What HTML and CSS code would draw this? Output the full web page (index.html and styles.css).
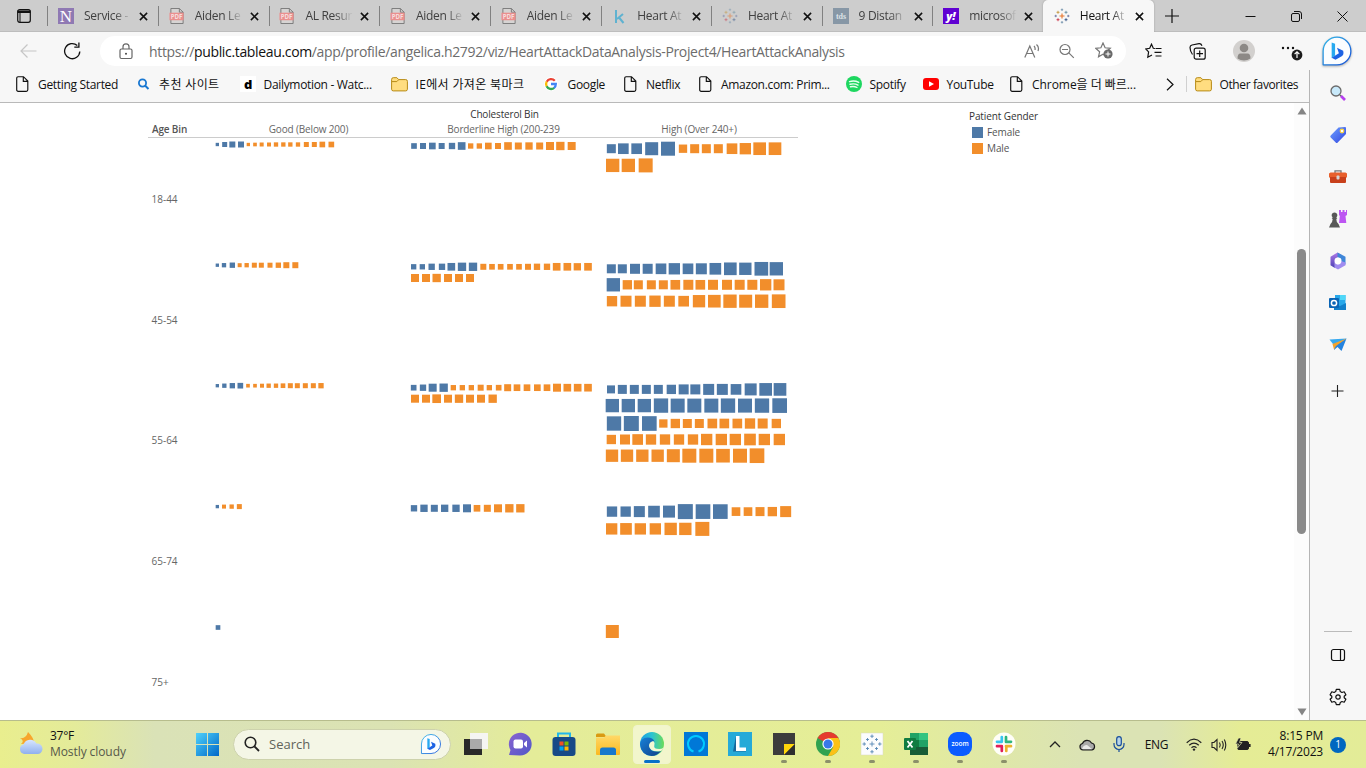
FILE: index.html
```html
<!DOCTYPE html>
<html lang="en">
<head>
<meta charset="utf-8">
<title>Heart Attack Analysis</title>
<link rel="stylesheet" href="styles.css">
</head>
<body>
<svg class="defs" width="0" height="0">
  <defs>
    <linearGradient id="gBing" x1="0" y1="0" x2="1" y2="1"><stop offset="0" stop-color="#31b8e8"/><stop offset="1" stop-color="#1750d8"/></linearGradient>
    <linearGradient id="gTag" x1="0" y1="0" x2="1" y2="1"><stop offset="0" stop-color="#6da0ff"/><stop offset="1" stop-color="#3347e0"/></linearGradient>
    <linearGradient id="gWin" x1="0" y1="0" x2="1" y2="1"><stop offset="0" stop-color="#4fd2fb"/><stop offset="1" stop-color="#0067c8"/></linearGradient>
    <linearGradient id="gFold" x1="0" y1="0" x2="0" y2="1"><stop offset="0" stop-color="#ffd868"/><stop offset="1" stop-color="#fbb91f"/></linearGradient>
    <linearGradient id="gCloud" x1="0" y1="0" x2="0" y2="1"><stop offset="0" stop-color="#d8e6ff"/><stop offset="1" stop-color="#8fb0ee"/></linearGradient>
    <linearGradient id="gEdge" x1="0" y1="0" x2="1" y2="0"><stop offset="0" stop-color="#1b9de2"/><stop offset=".5" stop-color="#2bc3d2"/><stop offset="1" stop-color="#6bdc5a"/></linearGradient>
    <linearGradient id="gEdge2" x1="0" y1="0" x2="1" y2="1"><stop offset="0" stop-color="#1681d8"/><stop offset="1" stop-color="#123f88"/></linearGradient>
    <linearGradient id="gChat" x1="0" y1="0" x2="1" y2="1"><stop offset="0" stop-color="#8a63d0"/><stop offset="1" stop-color="#5058c8"/></linearGradient>
    <linearGradient id="gM365" x1="0" y1="0" x2="0" y2="1"><stop offset="0" stop-color="#b07be8"/><stop offset="1" stop-color="#4b3fb5"/></linearGradient>
  </defs>
  <symbol id="pdf" viewBox="0 0 16 17"><path d="M1.500 .5h9L14.500 4.500V16.500H1.500z" fill="#d6d4d3" stroke="#777"/><path d="M10.500.5v4h4" fill="none" stroke="#777"/><rect y="5" width="15" height="8" fill="#ea8f8e"/><text x="7.500" y="11.500" text-anchor="middle" font-size="6.500" font-weight="700" fill="#f6dddd" class="ui">PDF</text></symbol>
  <symbol id="page" viewBox="0 0 13 16"><path d="M1.700.7h5.800l4.300 4.300v8.800q0 1.500-1.500 1.500H2.200q-1.500 0-1.500-1.500V2.200Q.7.700 2.200.7M7.300.9v4.400h4.400" fill="none" stroke="#111" stroke-width="1.150"/></symbol>
  <symbol id="folder" viewBox="0 0 17 15"><path d="M.6 2.500Q.6.700 2.300.7h3.600l1.800 1.900h7q1.700 0 1.700 1.700v7.900q0 1.700-1.700 1.700H2.300q-1.700 0-1.700-1.700z" fill="#ffdd80" stroke="#b78a15"/><path d="M1 4.600h4.800l2-2" fill="none" stroke="#b78a15"/></symbol>
  <symbol id="close" viewBox="0 0 10 10"><path d="M1 1l8 8M9 1L1 9" stroke="#111" stroke-width="1.700"/></symbol>
  <symbol id="tableau" viewBox="0 0 16 16"><g fill="none" stroke-width=".8"><path d="M8 5.500v5M5.500 8h5" stroke="#e8762c" stroke-width="1.100"/><path d="M4 2.800v3M2.500 4.300h3" stroke="#c28f2c"/><path d="M12 2.800v3M10.500 4.300h3" stroke="#5b879b"/><path d="M4 10.200v3M2.500 11.700h3" stroke="#c72035"/><path d="M12 10.200v3M10.500 11.700h3" stroke="#1f447e"/><path d="M8 .5v2.500M6.800 1.700h2.400M8 13v2.500M6.800 14.300h2.400" stroke="#6c8ea8"/><path d="M1.700 6.800v2.400M.5 8h2.500M14.300 6.800v2.400M13 8h2.500" stroke="#6670a0"/></g></symbol>
  <symbol id="bing" viewBox="0 0 30 30"><path d="M2 28V15A13 13 0 1 1 15 28z" fill="#fbfdff" stroke="url(#gBing)" stroke-width="1.200" stroke-linejoin="round"/><path d="M10 7l3.200 1.300v11l-3.200 2.400z" fill="#27a9f0"/><path d="M15 12l5.800 2.700q1.200 4.300-2.600 6l-4.600 2.500-3.600-1.800 6.800-4.200z" fill="#1c62e4"/></symbol>
</svg>

<header class="tabs">
  <div class="workspace"><svg width="16" height="16" viewBox="0 0 16 16"><rect x="1.700" y="1.700" width="12.600" height="12.600" rx="2" fill="none" stroke="#111" stroke-width="1.200"/><path d="M1.500 2.500h13v2.500h-13z" fill="#111"/><path d="M4 5v9" stroke="#111"/></svg></div>
  <div class="tab"><svg class="fav" viewBox="0 0 16 16"><rect width="16" height="16" fill="#8f79b3"/><text x="8" y="14" text-anchor="middle" font-size="17" class="serif" fill="#fff">N</text></svg><span>Service -</span><svg class="x"><use href="#close"/></svg></div>
  <div class="tab"><svg class="fav"><use href="#pdf"/></svg><span>Aiden Le</span><svg class="x"><use href="#close"/></svg></div>
  <div class="tab"><svg class="fav"><use href="#pdf"/></svg><span>AL Resur</span><svg class="x"><use href="#close"/></svg></div>
  <div class="tab"><svg class="fav"><use href="#pdf"/></svg><span>Aiden Le</span><svg class="x"><use href="#close"/></svg></div>
  <div class="tab"><svg class="fav"><use href="#pdf"/></svg><span>Aiden Le</span><svg class="x"><use href="#close"/></svg></div>
  <div class="tab"><svg class="fav" viewBox="0 0 16 16"><path d="M5 2v13M12 6L6 11M8 9.500L12.500 15" fill="none" stroke="#5fb2d0" stroke-width="2"/></svg><span>Heart At</span><svg class="x"><use href="#close"/></svg></div>
  <div class="tab"><svg class="fav pale"><use href="#tableau"/></svg><span>Heart At</span><svg class="x"><use href="#close"/></svg></div>
  <div class="tab"><svg class="fav" viewBox="0 0 16 16"><rect width="16" height="16" fill="#8797a6"/><text x="8" y="11" text-anchor="middle" font-size="8" font-weight="700" class="serif" fill="#dce2e7">tds</text></svg><span>9 Distan</span><svg class="x"><use href="#close"/></svg></div>
  <div class="tab"><svg class="fav" viewBox="0 0 16 16"><rect width="16" height="16" fill="#6001d2"/><text x="8" y="11.500" text-anchor="middle" font-size="11" font-weight="800" font-style="italic" class="ui" fill="#fff">y!</text></svg><span>microsof</span><svg class="x"><use href="#close"/></svg></div>
  <div class="tab active"><svg class="fav"><use href="#tableau"/></svg><span>Heart At</span><svg class="x"><use href="#close"/></svg></div>
  <div class="newtab"><svg width="14" height="14"><path d="M7 0v14M0 7h14" stroke="#111" stroke-width="1.200"/></svg></div>
  <div class="winctl">
    <svg width="11" height="11"><path d="M.5 5.500h10" stroke="#111"/></svg>
    <svg width="11" height="11"><rect x=".5" y="2.500" width="8" height="8" rx="1.500" fill="none" stroke="#111"/><path d="M3 .5h5q2.500 0 2.500 2.500v5" fill="none" stroke="#111"/></svg>
    <svg width="11" height="11"><path d="M.5.5l10 10M10.500.5l-10 10" stroke="#111"/></svg>
  </div>
</header>

<nav class="toolbar">
  <div><svg width="17" height="14"><path d="M16.500 7H1M7.500.5L1 7l6.500 6.500" fill="none" stroke="#c6c6c6" stroke-width="1.200"/></svg></div>
  <div><svg width="18" height="18"><path d="M16.800 9.500A7.600 7.600 0 1 1 14.300 3.500M15.900.5v4.600h-4.600" fill="none" stroke="#111" stroke-width="1.300"/></svg></div>
  <div class="address">
    <svg width="14" height="17"><rect x="1" y="6" width="12" height="9.500" rx="1.500" fill="none" stroke="#666" stroke-width="1.200"/><path d="M4 6V3.800a3 3 0 0 1 6 0V6" fill="none" stroke="#666" stroke-width="1.200"/><circle cx="7" cy="10.800" r="1" fill="#444"/></svg>
    <span class="url">https://<b>public.tableau.com</b>/app/profile/angelica.h2792/viz/HeartAttackDataAnalysis-Project4/HeartAttackAnalysis</span>
    <svg class="a1" width="16" height="16"><path d="M.8 14.500L5.800 3l5 11.500M2.600 10.500H9M10 3q1.500 1.500 1 4M12.500 1.500q3 2.500 1.500 6.500" fill="none" stroke="#777" stroke-width="1.200"/></svg>
    <svg class="a2" width="16" height="16"><path d="M3 6.500h6M9.800 9.800l5 5" stroke="#777" stroke-width="1.200"/><circle cx="6" cy="6.500" r="5" fill="none" stroke="#777" stroke-width="1.200"/></svg>
    <svg class="a3" width="18" height="18"><path d="M8 1l2.100 4.800 5.200.5-3.900 3.500 1.100 5L8 12.200 3.500 14.800l1.100-5L.7 6.300l5.200-.5z" fill="none" stroke="#777" stroke-width="1.200"/><circle cx="13" cy="12" r="4.600" fill="#696969"/><path d="M13 9.500v5M10.500 12h5" stroke="#fff"/></svg>
  </div>
  <div><svg width="17" height="16"><path d="M10 5.500L8.300 5.300 6.500 1.200 4.700 5.300.8 5.900l2.800 3-.8 5.300L7 12M10.500 5.500h6M9.500 9.300h7M10.500 13h6" fill="none" stroke="#111" stroke-width="1.200"/></svg></div>
  <div><svg width="17" height="17"><rect x="5.200" y="5.200" width="11" height="11" rx="2" fill="none" stroke="#111" stroke-width="1.200"/><path d="M10.700 7.500v6.500M7.500 10.700H14M3.500 11.500Q1 8 1 4.500 1 2.500 3 2l7-1.300q2-.3 3 2" fill="none" stroke="#111" stroke-width="1.200"/></svg></div>
  <div><svg width="22" height="22"><circle cx="11" cy="11" r="11" fill="#d2d0ce"/><circle cx="11" cy="8" r="4.300" fill="#8c8986"/><path d="M4.500 18.500q0-5 3-5h7q3 0 3 5-3 2-6.500 2t-6.500-2" fill="#8c8986"/></svg></div>
  <div><svg width="22" height="20"><g fill="#111"><circle cx="2" cy="7" r="1.200"/><circle cx="7" cy="7" r="1.200"/><circle cx="12" cy="7" r="1.200"/></g><circle cx="16" cy="14" r="6.300" fill="#f7f7f7"/><circle cx="16" cy="14" r="5.400" fill="#1b1b1b"/><path d="M16 17v-6M13.600 13.200L16 10.800l2.400 2.400" fill="none" stroke="#fff" stroke-width="1.200"/></svg></div>
  <div><svg class="bigbing" width="32" height="32"><use href="#bing"/></svg></div>
</nav>

<div class="main">
  <div class="page">
    <div class="bookmarks">
      <div><svg width="13" height="16"><use href="#page"/></svg><span>Getting Started</span></div>
      <div><svg width="13" height="14"><circle cx="5.500" cy="6" r="3.600" fill="none" stroke="#1977d1" stroke-width="1.800"/><path d="M8 8.500l3.500 3.500" stroke="#1977d1" stroke-width="2"/></svg><span class="ko">추천 사이트</span></div>
      <div><svg width="16" height="16"><rect width="16" height="16" fill="#fff"/><text x="8" y="12.500" text-anchor="middle" font-size="13" font-weight="800" class="ui">d</text></svg><span>Dailymotion - Watc...</span></div>
      <div><svg width="17" height="15"><use href="#folder"/></svg><span class="ko">IE에서 가져온 북마크</span></div>
      <div><svg class="google" width="14" height="14" viewBox="0 0 14 14"><circle cx="7" cy="7" r="7" fill="#fff"/><g fill="none" stroke-width="2.300"><path d="M10.800 3.800A5 5 0 0 0 2.700 4.800" stroke="#ea4335"/><path d="M2.700 4.600a5 5 0 0 0 0 4.800" stroke="#fbbc05"/><path d="M2.600 9.200a5 5 0 0 0 7.700 1.600" stroke="#34a853"/><path d="M7 7h4.800q0 2.500-1.700 4" stroke="#4285f4"/></g></svg><span>Google</span></div>
      <div><svg width="13" height="16"><use href="#page"/></svg><span>Netflix</span></div>
      <div><svg width="13" height="16"><use href="#page"/></svg><span>Amazon.com: Prim...</span></div>
      <div><svg width="16" height="16"><circle cx="8" cy="8" r="8" fill="#1ed760"/><path d="M3.500 5.600q5-1.500 9.200.8M4 8.300q4.500-1.200 8 .8M4.500 10.800q3.600-.9 6.500.7" fill="none" stroke="#e9fff0" stroke-width="1.400" stroke-linecap="round"/></svg><span>Spotify</span></div>
      <div><svg width="16" height="12"><rect width="16" height="12" rx="3" fill="#f00"/><path d="M6 3.200v5.600L11 6z" fill="#fff"/></svg><span>YouTube</span></div>
      <div><svg width="13" height="16"><use href="#page"/></svg><span class="chrome-ko">Chrome을 더 빠르...</span></div>
      <div class="more"><svg width="8" height="13"><path d="M1 .8l6 5.700-6 5.700" fill="none" stroke="#111" stroke-width="1.200"/></svg></div>
      <div class="other"><svg width="17" height="15"><use href="#folder"/></svg><span>Other favorites</span></div>
    </div>
    <div class="content">
      <section class="viz">
        <h1>Cholesterol Bin</h1>
        <div class="heads"><b>Age Bin</b><span>Good (Below 200)</span><span>Borderline High (200-239</span><span>High (Over 240+)</span></div>
        <div class="plot">
          <div class="ages"><span>18-44</span><span>45-54</span><span>55-64</span><span>65-74</span><span>75+</span></div>
          <svg id="marks" width="590" height="582" viewBox="208 138 590 582"></svg>
        </div>
      </section>
      <aside class="legend">
        <h2>Patient Gender</h2>
        <div><i class="female"></i>Female</div>
        <div><i class="male"></i>Male</div>
      </aside>
      <div class="scroll"><svg width="10" height="8"><path d="M5 .5L9.500 7.500H.5z" fill="#858585"/></svg><i></i><svg width="10" height="8"><path d="M5 7.500L9.500.5H.5z" fill="#858585"/></svg></div>
    </div>
  </div>
  <aside class="side">
    <svg viewBox="0 0 18 18"><circle cx="7" cy="7" r="5" fill="#c8e9fa" stroke="#6b6b6b" stroke-width="1.300"/><path d="M11 11l1.800 1.800" stroke="#666" stroke-width="1.600"/><path d="M12 12l4 4" stroke="#b63ff0" stroke-width="2.600"/></svg>
    <svg viewBox="0 0 18 18"><path d="M9.500 1.500L16 1q1 0 1 1v6l-8.300 8.500q-1 1-2 0l-5-5q-1-1 0-2z" fill="url(#gTag)"/><circle cx="13" cy="5" r="1.800" fill="#fff" stroke="#ffd43b" stroke-width="1.200"/></svg>
    <svg viewBox="0 0 18 18"><path d="M6 5V2.800h6V5" fill="none" stroke="#777" stroke-width="1.300"/><path d="M0 5.500L1.500 4.500h15l1.500 1v4H0z" fill="#e8602c"/><path d="M1 9h16v5q0 1-1 1H2q-1 0-1-1z" fill="#c8401b"/><rect x="7.500" y="7.500" width="3" height="4" rx="1" fill="#d5d5d5"/></svg>
    <svg viewBox="0 0 18 18"><path d="M10 0h2v2h1.500V0h2v2H17V0h1v5l-1.500 1 .8 7H10l.8-7L10 5z" fill="#bd55f2"/><path d="M5.500 2.500a2.800 2.800 0 0 1 1.800 5l1 .8-1 .8q0 3.500 2.200 5l1.500 3.500H0l1.500-3.500q2-1.500 2.200-5l-1-.8 1-.8a2.800 2.800 0 0 1 1.800-5" fill="#585858"/></svg>
    <svg viewBox="0 0 18 18"><path d="M8.500 .5L1.500 4.700v8.600l4.300 2.600V7.200L12.500 3z" fill="url(#gM365)"/><path d="M8.500 .5l8 4.200v7.800L12.200 10V7L8.500 5.200z" fill="#3f86d8"/><path d="M5.800 10.800v5L9 17.500l7.500-4.300V10.500L12.200 9 9 12.500z" fill="#a08cf0"/><circle cx="9" cy="9" r="3.400" fill="#fff"/></svg>
    <svg viewBox="0 0 18 18"><path d="M6 1h10.500v14H6z" fill="#28a8ea"/><path d="M11 1h5.500v5H11z" fill="#4fd7f8"/><path d="M5 9l6 3 6-3v7H5z" fill="#127fca"/><rect y="4" width="10" height="10" rx="1" fill="#0a64b5"/><circle cx="5" cy="9" r="2.600" fill="none" stroke="#fff" stroke-width="1.500"/></svg>
    <svg viewBox="0 0 18 18"><path d="M.5 3.500L17.500 2.500 5.500 10z" fill="#35a8ef"/><path d="M17.500 2.500L12.500 15 8.500 11l-3.500 3 .5-5z" fill="#2583df"/><path d="M17.500 2.500L3.500 8l1.500 5.500 2-3.500z" fill="#f4a32c"/></svg>
    <svg class="plus" viewBox="0 0 18 18"><path d="M8.500 3v12M2.500 9h12" stroke="#222" stroke-width="1.100"/></svg>
    <div class="bottom">
      <svg viewBox="0 0 18 18"><rect x="2.500" y="3.500" width="13" height="11" rx="2" fill="none" stroke="#111" stroke-width="1.200"/><path d="M11.500 3.500v11" stroke="#111" stroke-width="1.200"/></svg>
      <svg viewBox="0 0 18 18"><path d="M7.300 1.300h3.400l.6 2.300 1.600.9 2.300-.7 1.700 2.900-1.700 1.600v1.400l1.700 1.600-1.700 2.900-2.300-.7-1.600.9-.6 2.300H7.300l-.6-2.300-1.600-.9-2.300.7-1.700-2.900 1.700-1.600V8.300L1.100 6.700l1.700-2.900 2.300.7 1.600-.9z" fill="none" stroke="#111" stroke-width="1.200" stroke-linejoin="round"/><circle cx="9" cy="9" r="2.200" fill="none" stroke="#111" stroke-width="1.200"/></svg>
    </div>
  </aside>
</div>

<footer class="taskbar">
  <div class="weather">
    <svg width="26" height="26"><path d="M2 8q6 1 8-6 6 6 6 11L3 14q4-3-1-6" fill="#f7a62c"/><path d="M6 24a5 5 0 0 1-.4-9.700 7 7 0 0 1 12.800-.8A5.300 5.300 0 0 1 20 24z" fill="url(#gCloud)"/></svg>
    <p><span>37°F</span><br><em>Mostly cloudy</em></p>
  </div>
  <svg class="start" width="23" height="23"><path d="M0 0h11v11H0zM12 0h11v11H12zM0 12h11v11H0zM12 12h11v11H12z" fill="url(#gWin)"/></svg>
  <div class="search"><svg width="16" height="16"><circle cx="6.500" cy="6.500" r="5.300" fill="none" stroke="#222" stroke-width="1.600"/><path d="M10.500 10.500l4.500 4.500" stroke="#222" stroke-width="1.800"/></svg><span>Search</span><svg width="22" height="22"><use href="#bing"/></svg></div>
  <div class="apps">
    <div><svg viewBox="0 0 24 24"><rect x="0" y="7" width="18" height="16" fill="#292929"/><rect x="6" y="1" width="18" height="16" fill="#f5f5f2"/><path d="M6 7h12v10H6z" fill="#aaa"/></svg></div>
    <div><svg viewBox="0 0 24 24"><path d="M1 23l1.500-5A11.400 11.400 0 1 1 12 23.500z" fill="url(#gChat)"/><rect x="5.500" y="7.500" width="9.500" height="9" rx="2" fill="#fff"/><path d="M16 11l3-2.500v7L16 13z" fill="#fff"/></svg></div>
    <div><svg viewBox="0 0 24 24"><path d="M6 6V1.500h12V6" fill="none" stroke="#20b7ea" stroke-width="2"/><rect x=".5" y="5" width="23" height="19" rx="3" fill="#174a87"/><path d="M7.500 9.500h4v4h-4z" fill="#f25022"/><path d="M12.500 9.500h4v4h-4z" fill="#7fba00"/><path d="M7.500 14.500h4v4h-4z" fill="#00a4ef"/><path d="M12.500 14.500h4v4h-4z" fill="#ffb900"/></svg></div>
    <div><svg viewBox="0 0 24 24"><path d="M0 3q0-1.500 1.500-1.500H8L10.500 5H0z" fill="#d99a12"/><path d="M0 5.500h8l2-2h14V22q0 1-1 1H1q-1 0-1-1z" fill="url(#gFold)"/><path d="M4 23v-5q0-2.500 2.500-2.500h11q2.500 0 2.500 2.500v5z" fill="#1678cc"/></svg></div>
    <div class="current"><svg viewBox="0 0 24 24"><circle cx="12" cy="12" r="12" fill="url(#gEdge)"/><path d="M0 12q1-6.500 7.500-6.500 5.500 0 7 4-6 0-5 5.500 1.500 6 11.500 4Q17 24 11.500 24 1 23 0 12" fill="url(#gEdge2)"/><path d="M23.800 14q0 3-4.500 3-6 0-5-3.500 1.200-2.500-1-4.500-4.300 1-4.300 5 1 6.500 12 5 3-2 2.800-5" fill="#f4f8d4"/></svg><i></i></div>
    <div><svg viewBox="0 0 24 24"><path d="M0 0h24v24H0z" fill="#0078d7"/><path d="M9.500 19.500a8 8 0 1 1 5 0" fill="none" stroke="#00caff" stroke-width="2"/></svg></div>
    <div><svg viewBox="0 0 24 24"><path d="M0 0h24v24H0z" fill="#25aad8"/><path d="M5 19.500L8 4v12.500h10v3z" fill="#17679b"/><path d="M8 4h3.500v11.500H18V19H8z" fill="#fff"/></svg></div>
    <div><svg viewBox="0 0 24 24"><path d="M1 1h22v22H1z" fill="#3c3c3c"/><path d="M12 12h11L12 23z" fill="#ffd60a"/><path d="M23 12v11H12z" fill="#2e2e2e"/></svg><i></i></div>
    <div><svg viewBox="0 0 24 24"><circle cx="12" cy="12" r="12" fill="#31a350"/><path d="M12 12L1.600 6A12 12 0 0 1 22.400 6z" fill="#e53b2e"/><path d="M12 6h10.400A12 12 0 0 1 12 24l5.200-9z" fill="#fbc116"/><circle cx="12" cy="12" r="5.600" fill="#fff"/><circle cx="12" cy="12" r="4.500" fill="#3979e8"/></svg><i></i></div>
    <div><svg viewBox="0 0 24 24"><rect x="1" y="1" width="22" height="22" fill="#fbfcfd" stroke="#d9d9c0" stroke-width=".5"/><g stroke="#5688b4" stroke-width=".9"><path d="M12 9.500v5M9.500 12h5M7.500 6v3M6 7.500h3M16.500 6v3M15 7.500h3M7.500 15v3M6 16.500h3M16.500 15v3M15 16.500h3M12 2.500v3.500M10.300 4.200h3.400M12 18v3.500M10.300 19.800h3.400M4.200 10.300v3.400M2.500 12H6M19.800 10.300v3.400M18 12h3.500"/></g></svg><i></i></div>
    <div><svg viewBox="0 0 24 24"><path d="M6 1h18v22H6z" fill="#21a366"/><path d="M15 1h9v7h-9z" fill="#33c481"/><path d="M6 8h9v7H6z" fill="#107c41"/><path d="M6 15h18v8H6z" fill="#185c37"/><rect y="6" width="12" height="12" rx="1" fill="#107c41"/><path d="M3.500 9l5 6.500M8.500 9l-5 6.500" stroke="#fff" stroke-width="1.800"/></svg><i></i></div>
    <div><svg viewBox="0 0 24 24"><rect width="24" height="24" rx="9" fill="#0b5cff"/><text x="12" y="14" text-anchor="middle" font-size="6.500" font-weight="600" class="ui" fill="#fff">zoom</text></svg><i></i></div>
    <div><svg viewBox="0 0 24 24"><circle cx="12" cy="12" r="11.500" fill="#fffef8"/><g stroke-width="2.700" stroke-linecap="round" fill="none"><path d="M9.800 5v4.800M5 9.800h4.800" stroke="#36c5f0"/><path d="M14 5v5M14 9.800h5" stroke="#2eb67d"/><path d="M14.300 19v-5M19 14.200h-5" stroke="#ecb22e"/><path d="M9.800 19v-5M5 14.200h4.800" stroke="#e01e5a"/></g></svg><i></i></div>
  </div>
  <div class="tray">
    <div><svg width="12" height="7"><path d="M1 6l5-5 5 5" fill="none" stroke="#222" stroke-width="1.300"/></svg></div>
    <div><svg width="17" height="12"><path d="M4 11a3.300 3.300 0 0 1-.5-6.500A5 5 0 0 1 12.500 4 3.600 3.600 0 0 1 13 11z" fill="#aaa" stroke="#1b1b1b" stroke-width="1.200"/><path d="M3 10q1-4 5-4l5 4" fill="#e9e9e9"/></svg></div>
    <div><svg width="12" height="17"><rect x="3.700" y=".7" width="4.600" height="9" rx="2.300" fill="#b8d4e7" stroke="#184d9b" stroke-width="1.200"/><path d="M1 7v1.500a5 5 0 0 0 10 0V7M6 13.500V16" fill="none" stroke="#184d9b" stroke-width="1.200"/></svg></div>
    <div>ENG</div>
    <div><svg width="16" height="13"><path d="M.7 4.700q7.300-7 14.600 0M3.200 7.300q4.800-4.500 9.600 0M5.500 9.800q2.500-2.300 5 0" fill="none" stroke="#222" stroke-width="1.200"/><circle cx="8" cy="11.600" r="1.200" fill="#222"/></svg></div>
    <div><svg width="17" height="14"><path d="M1 4.500h2L6 1.500v11l-3-3H1zM8.500 4.500q1.500 2.500 0 5M11 3q2.500 4 0 8M13.300 1.500q3 5.500 0 11" fill="none" stroke="#222" stroke-width="1.100"/></svg></div>
    <div><svg width="17" height="13"><rect x="2.500" y="3.500" width="11" height="8" rx="1.500" fill="#222" stroke="#222"/><path d="M14.800 6v3" stroke="#222" stroke-width="1.600"/><path d="M3.500 0L.5 6h3L2 10.500 7 4.500H4.500L6 0z" fill="#222" stroke="#e2e8aa" stroke-width=".7"/></svg></div>
  </div>
  <p class="clock">8:15 PM<br>4/17/2023</p>
  <span class="badge">1</span>
</footer>
<script src="marks.js"></script>
</body>
</html>
```
FILE: styles.css
```css
* { box-sizing: border-box; }
body { margin: 0; width: 1366px; height: 768px; overflow: hidden; display: flex; flex-direction: column; background: #fff; font: 12px "Open Sans", "Noto Sans CJK KR", sans-serif; color: #111; }
svg { display: block; flex: none; }
p, h1, h2 { margin: 0; }
.defs { position: absolute; }
.ui { font-family: "Open Sans", sans-serif; }
.serif { font-family: "Liberation Serif", serif; }

.tabs { height: 32px; flex: none; display: flex; background: #cdcdcd; border-bottom: 1px solid #bdbdbd; }
.workspace { width: 47.300px; padding: 8px 0 0 16px; }
.tab { position: relative; width: 110.650px; height: 32px; display: flex; align-items: center; padding-left: 10.800px; }
.tab::before { content: ""; position: absolute; left: 0; top: 6px; width: 1px; height: 20px; background: #818181; }
.fav { width: 16px; height: 16px; }
.pale { opacity: .55; }
.tab span { width: 49px; margin: 0 6px 0 10px; line-height: 18px; white-space: nowrap; color: #404040; letter-spacing: -.3px; -webkit-mask-image: linear-gradient(90deg, #000 62%, transparent 98%); mask-image: linear-gradient(90deg, #000 62%, transparent 98%); }
.x { width: 9px; height: 9px; }
.tab.active { background: #f7f7f7; border-radius: 5px 5px 0 0; box-shadow: 0 0 2px #999; clip-path: inset(-2px -2px 0 -2px); }
.tab.active::before { display: none; }
.tab.active span { color: #111; }
.newtab { padding: 9px 0 0 11px; }
.winctl { margin-left: auto; padding: 11px 18px 0 0; display: flex; gap: 35px; }

.toolbar { height: 38px; flex: none; display: grid; grid-template-columns: 56px 32px 1050px 31px 57px 35px 62px 28px; justify-content: start; background: #f7f7f7; }
.toolbar > div { display: flex; align-items: center; justify-content: center; }
.toolbar > .address { width: 1026px; height: 30px; margin: 4px 0 0 12px; border-radius: 15px; background: #fff; justify-content: flex-start; padding-left: 19px; }
.url { margin-left: 16px; width: 697px; font-size: 14px; white-space: nowrap; color: #6c6c6c; letter-spacing: -.345px; }
.url b { font-weight: 400; color: #111; }
.a1 { margin-left: 178px; }
.a2 { margin-left: 19px; }
.a3 { margin-left: 20px; }
.bigbing { filter: drop-shadow(0 1px 1px #aaa); }

.main { flex: 1; display: flex; min-height: 0; }
.page { width: 1309px; display: flex; flex-direction: column; }
.bookmarks { height: 33px; flex: none; background: #f7f7f7; border-bottom: 1px solid #b9b9b9; display: grid; grid-template-columns: 121px 103px 151px 153px 80px 75px 147px 77px 87px 156px 19px 124px; padding-left: 15.500px; }
.bookmarks > div { display: flex; align-items: center; gap: 8px; padding-bottom: 4px; white-space: nowrap; letter-spacing: -.32px; }
.bookmarks > div > svg[width="13"] { margin-right: 1.500px; }
.bookmarks .google { margin: 0 2px 0 0; }
.bookmarks .ko { letter-spacing: .35px; }
.bookmarks .chrome-ko { letter-spacing: -.05px; }
.bookmarks .other { position: relative; padding-left: 10px; letter-spacing: -.38px; }
.bookmarks .other::before { content: ""; position: absolute; left: 1px; top: 6px; width: 1px; height: 16px; background: #d0d0d0; }
.content { flex: 1; display: flex; min-height: 0; }
.viz { width: 650px; margin-left: 148px; font-size: 10px; letter-spacing: -.16px; color: #666; }
.viz h1 { height: 19px; padding: 4px 0 0 63px; text-align: center; font-size: 10px; line-height: 14px; font-weight: 500; color: #333; }
.heads { display: grid; grid-template-columns: 64px 195px 195px 196px; height: 16px; border-bottom: 1px solid #ccc; line-height: 15px; text-align: center; }
.heads span { padding-right: 2px; }
.heads b { text-align: left; padding-left: 4px; color: #555; font-weight: 600; }
.plot { display: flex; height: 582px; }
.ages { width: 60px; padding: 1px 0 0 3.500px; display: flex; flex-direction: column; letter-spacing: 0; }
.ages span { height: 120.700px; line-height: 120.700px; flex: none; }
.legend { margin-left: 171px; padding-top: 5px; width: 120px; font-size: 10px; letter-spacing: -.1px; color: #555; }
.legend h2 { font-size: 10px; line-height: 16px; font-weight: 500; color: #333; white-space: nowrap; }
.legend div { height: 16px; display: flex; align-items: center; }
.legend i { width: 11px; height: 11px; margin: 0 4px 0 3px; }
.female { background: #4e79a7; }
.male { background: #f28e2b; }
.scroll { margin-left: auto; width: 15px; background: #fcfcfc; display: flex; flex-direction: column; align-items: center; padding: 4px 0; }
.scroll i { width: 9px; height: 285px; margin: 134px 0 auto; border-radius: 5px; background: #8a8a8a; }
.side { flex: 1; height: 650px; background: #f7f7f7; border-left: 1px solid #b5b5b5; display: flex; flex-direction: column; align-items: center; gap: 24px; padding-top: 14px; }
.side svg { width: 18px; height: 18px; }
.side .plus { margin-top: 4px; }
.bottom { margin-top: auto; width: 28px; border-top: 1px solid #bbb; display: flex; flex-direction: column; align-items: center; gap: 24px; padding: 14px 0 14px; }

.taskbar { height: 48px; flex: none; display: flex; align-items: center; border-top: 1px solid #b7bd8d; background: linear-gradient(90deg, #e9ee8e 0, #e4eb9a 75px, #dae2b7 155px, #dbe3b3 390px, #e4ec99 530px, #e5ee97 880px, #dbe3b4 1080px, #dbe3b4 1160px, #e5ec95 1240px, #e3ec98 100%); }
.weather { width: 196px; padding-left: 18px; display: flex; align-items: center; gap: 6px; line-height: 16px; }
.weather svg { margin-top: -4px; }
.weather p { letter-spacing: -.25px; margin-top: -1px; }
.weather em { font-style: normal; color: #56584a; letter-spacing: -.08px; }
.search { width: 218px; height: 31px; margin: -1px 0 0 14px; border: 1px solid #cdd2ac; border-radius: 16px; background: #f4f6e6; display: flex; align-items: center; padding: 0 8px 0 10px; }
.search span { margin: 0 auto 0 9px; color: #60635a; font-size: 13px; }
.apps { display: flex; margin-left: 3px; }
.apps > div { position: relative; width: 44px; height: 47px; display: flex; align-items: center; justify-content: center; }
.apps svg { position: relative; top: -.5px; width: 24px; height: 24px; }
.apps i { position: absolute; bottom: 5px; left: 19px; width: 6px; height: 3px; border-radius: 2px; background: #8b906a; }
.apps .current::before { content: ""; position: absolute; inset: 4px 3px; border: 1px solid #f0f4cf; border-radius: 4px; background: #f2f6cc; }
.apps .current i { left: 14px; width: 16px; background: #0870c8; }
.tray { display: grid; grid-template-columns: 32px 32px 32px 43px 32px 19px 28px; margin-left: 13px; letter-spacing: -.3px; }
.tray > div { display: flex; align-items: center; justify-content: center; }
.clock { margin: -1px 0 0 auto; text-align: right; line-height: 16px; letter-spacing: -.2px; }
.badge { width: 16px; height: 16px; margin: 0 20px 0 7px; border-radius: 50%; background: #0067c0; color: #fff; font-size: 10px; line-height: 15px; text-align: center; }
```
FILE: marks.js
```js
// Each row: origin x, centre y, female marks, male marks.
// A mark is "centre:size" in thirds of a pixel, measured from the origin.
const rows = [
  [145, 144.5, "217:10 239:15 262:18 288:18", "310:10 330:11 350:12 372:12 393:13 415:13 436:13 459:13 484:15 508:15 532:17 559:17"],
  [145, 265.2, "217:10 237:13 262:16", "284:12 305:13 328:15 349:15 375:15 400:16 424:18 451:18"],
  [145, 385.7, "217:10 238:13 262:16 286:17", "309:11 330:11 351:12 371:13 393:13 414:14 436:15 457:15 481:15 505:15 528:16"],
  [145, 506.6, "217:10", "237:12 260:13 283:15"],
  [145, 627.5, "219:14", ""],
  [400, 146, "42:17 69:18 97:20 125:18 156:19 185:23", "212:16 238:16 265:20 294:18 324:23 355:21 387:22 419:21 450:24 481:25 515:24"],
  [400, 266.8, "41:16 67:16 95:19 126:19 154:23 186:25 219:25", "250:18 276:17 302:17 330:17 357:17 384:18 411:19 441:19 470:23 502:23 532:22 564:23"],
  [400, 278, "", "45:24 78:24 110:25 144:24 177:24 210:24"],
  [400, 387.7, "41:17 69:19 98:24 131:25", "160:16 187:16 214:16 242:18 268:16 296:17 323:21 351:20 381:20 412:20 441:20 471:24 502:23 533:23 564:23"],
  [400, 398.7, "", "45:24 78:24 110:26 144:24 177:25 210:24 243:24 278:25"],
  [400, 508.3, "42:19 72:22 103:21 134:22 168:22 201:24", "231:20 262:21 294:24 328:25 361:25"],
  [595, 148.7, "49:27 85:32 125:32 170:39 219:42", "264:25 299:27 334:27 370:27 411:32 451:34 494:38 540:38"],
  [595, 165.4, "", "53:40 100:40 152:42"],
  [595, 268.8, "49:27 82:27 120:30 158:30 198:32 238:34 279:32 319:33 361:35 406:38 451:37 499:41 544:40", ""],
  [595, 284.8, "55:40", "97:28 130:27 169:27 205:27 241:29 280:30 316:29 354:30 396:30 434:30 472:30 512:34 552:33"],
  [595, 301.2, "", "51:31 93:33 136:33 180:34 223:33 266:32 312:37 358:38 405:40 452:39 500:40 551:41"],
  [400, 389.4, "633:24 667:27 703:27 739:27 775:27 814:28 851:30 886:30 926:33 967:33 1008:32 1052:36 1097:38 1140:38", ""],
  [400, 405.6, "637:40 685:40 733:40 783:43 833:42 883:42 934:42 984:43 1035:42 1086:43 1139:44", ""],
  [400, 423.5, "642:43 694:45 748:44", "790:25 826:28 862:27 898:27 937:29 973:29 1012:29 1050:31 1088:30 1129:28"],
  [400, 439.5, "", "634:28 675:30 713:32 753:31 795:31 837:31 879:31 920:34 964:34 1006:34 1050:35 1093:34 1138:34"],
  [400, 455.7, "", "636:37 681:37 727:37 773:37 820:39 868:42 919:42 969:41 1020:42 1071:44"],
  [400, 511.6, "636:31 677:31 718:33 762:35 807:36 856:45 909:44 961:44", "1008:26 1044:26 1080:27 1117:28 1157:33"],
  [400, 528.9, "", "635:34 678:35 721:34 766:34 812:37 856:37 907:42"],
  [595, 631.5, "", "52:39"]
];
const svg = document.getElementById("marks");
const draw = (list, ox, y, fill) => {
  for (const mark of list.split(" ").filter(Boolean)) {
    const [c, s] = mark.split(":").map(n => n / 3);
    const r = document.createElementNS("http://www.w3.org/2000/svg", "rect");
    for (const [k, v] of Object.entries({ x: ox + c - s / 2, y: y - s / 2, width: s, height: s, fill })) r.setAttribute(k, v);
    svg.append(r);
  }
};
for (const [ox, y, female, male] of rows) {
  draw(female, ox, y, "#4e79a7");
  draw(male, ox, y, "#f28e2b");
}
```
